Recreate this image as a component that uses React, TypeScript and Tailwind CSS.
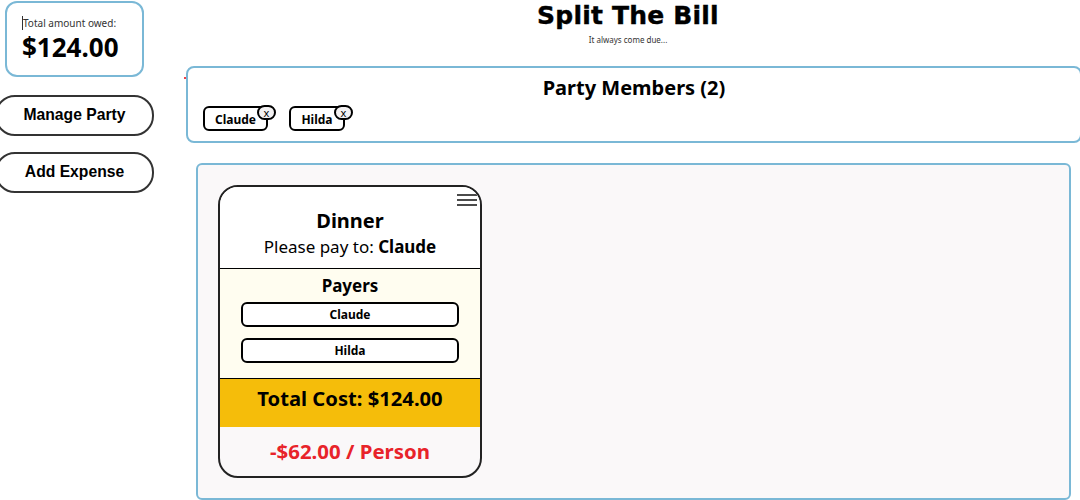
import React from "react";

function Chip({ name, w }: { name: string; w: string }) {
  return (
    <div className={`relative flex h-[25px] items-center justify-center rounded-[6px] border-2 border-black bg-white pt-[2px] text-[12px] font-bold leading-none ${w}`}>
      <span>{name}</span>
      <span className="absolute -right-[10px] -top-[3px] flex h-[15px] w-[19px] items-center justify-center rounded-[8px] border-2 border-black bg-[#f3f1f2] text-[11px] font-normal leading-none">x</span>
    </div>
  );
}

function Payer({ name }: { name: string }) {
  return (
    <div className="flex h-[25px] w-[218px] items-center justify-center rounded-[6px] border-2 border-black bg-white text-[12px] font-bold leading-none">
      {name}
    </div>
  );
}

function SideButton({ label }: { label: string }) {
  return (
    <button className="-ml-[10px] flex h-[41px] w-[159px] items-center justify-center rounded-[20px] border-2 border-[#333] bg-white pb-[1px] font-['Liberation_Sans',sans-serif] text-[15.7px] font-bold leading-none text-black">
      {label}
    </button>
  );
}

export default function App() {
  return (
    <div className="flex h-[500px] w-[1080px] overflow-hidden bg-white font-['Noto_Sans','Open_Sans',sans-serif] text-black">
      <aside className="flex w-[186px] shrink-0 flex-col pl-[5px] pt-[1px]">
        <div className="flex h-[76px] w-[139px] flex-col rounded-[12px] border-2 border-[#7ab8d6] pl-[15px] pt-[12px]">
          <div className="flex items-center text-[10px] leading-[16px] text-[#333]">
            <span className="h-[14px] w-px bg-[#333]" />
            <span>Total amount owed:</span>
          </div>
          <div className="text-[26px] font-bold leading-[32px]">$124.00</div>
        </div>
        <div className="mt-[18px] flex flex-col gap-[16px]">
          <SideButton label="Manage Party" />
          <SideButton label="Add Expense" />
        </div>
      </aside>

      <main className="relative flex min-w-0 flex-1 flex-col">
        <span className="absolute -left-[2px] top-[77px] h-[2px] w-[2px] rounded-full bg-red-600" />
        <header className="flex h-[66px] flex-col items-center pr-[10px]">
          <h1 className="mt-[1px] font-['DejaVu_Sans',sans-serif] text-[25px] font-bold leading-[30px] tracking-[0.2px] [-webkit-text-stroke:0.4px_black]">Split The Bill</h1>
          <p className="mt-[3px] text-[8px] leading-[12px] text-[#333]">It always come due...</p>
        </header>

        <section className="-mr-[2px] h-[77px] rounded-[8px] border-2 border-[#7ab8d6] pl-[15px] pt-[6px]">
          <h2 className="-ml-[15px] text-center text-[20px] font-bold leading-[28px]">Party Members (2)</h2>
          <div className="mt-[4px] flex gap-[21px]">
            <Chip name="Claude" w="w-[65px]" />
            <Chip name="Hilda" w="w-[56px]" />
          </div>
        </section>

        <section className="ml-[10px] mr-[9px] mt-[20px] h-[337px] rounded-[6px] border-2 border-[#7ab8d6] bg-[#faf8f9] pl-[20px] pt-[20px]">
          <article className="flex h-[293px] w-[264px] flex-col overflow-hidden rounded-[20px] border-2 border-[#222] bg-[#faf8f9]">
            <div className="relative flex h-[82px] shrink-0 flex-col items-center border-b border-black bg-white pt-[20px]">
              <svg className="absolute right-[3px] top-[5px]" width="20" height="16" viewBox="0 0 20 16" fill="none" stroke="#111" strokeWidth="1.5">
                <path d="M0 3h20M0 8h20M0 13h20" />
              </svg>
              <div className="text-[20px] font-bold leading-[28px]">Dinner</div>
              <div className="text-[17px] leading-[24px]">
                Please pay to: <b>Claude</b>
              </div>
            </div>
            <div className="flex h-[110px] shrink-0 flex-col items-center border-b border-black bg-[#fffdf0] pt-[5px]">
              <div className="text-[17px] font-bold leading-[24px]">Payers</div>
              <div className="mt-[4px] flex flex-col gap-[11px]">
                <Payer name="Claude" />
                <Payer name="Hilda" />
              </div>
            </div>
            <div className="flex h-[48px] shrink-0 items-center justify-center bg-[#f5bd0a] pb-[9px] text-[20.2px] font-bold leading-none">
              Total Cost: $124.00
            </div>
            <div className="flex flex-1 items-center justify-center text-[20.4px] font-bold leading-none text-[#e8232a]">
              -$62.00 / Person
            </div>
          </article>
        </section>
      </main>
    </div>
  );
}
